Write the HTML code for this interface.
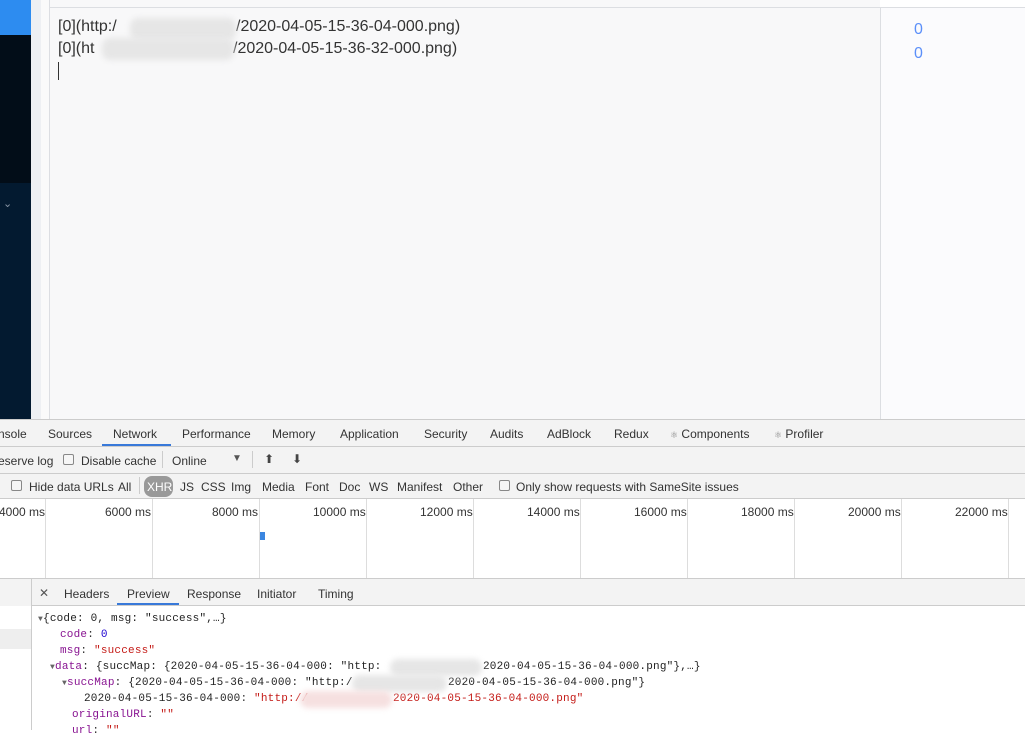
<!DOCTYPE html>
<html><head><meta charset="utf-8"><style>
*{margin:0;padding:0;box-sizing:border-box}
body{width:1025px;height:730px;overflow:hidden;position:relative;background:#fff;font-family:"Liberation Sans","DejaVu Sans",sans-serif;font-size:12px;color:#333}
.a{position:absolute}
.t{position:absolute;white-space:nowrap}
.mono{font-family:"Liberation Mono","DejaVu Sans Mono",monospace;font-size:11px;letter-spacing:0.2px}
.blur{position:absolute;background:#e6e6e6;border-radius:8px;filter:blur(3px)}
.cb{position:absolute;width:11px;height:11px;border:1px solid #888;border-radius:2px;background:#f6f6f6}
.vl{position:absolute;top:499px;height:79px;width:1px;background:#ddd}
</style></head><body>
<div class="a" style="left:0;top:0;width:31px;height:35px;background:#2d8cf0"></div>
<div class="a" style="left:0;top:35px;width:31px;height:148px;background:#020d18"></div>
<div class="a" style="left:0;top:183px;width:31px;height:236px;background:#031a30"></div>
<div class="t" style="left:3px;top:197px;color:#8a96a6;font-size:11px">⌄</div>
<div class="a" style="left:31px;top:0;width:10px;height:419px;background:#eef0f3"></div>
<div class="a" style="left:41px;top:0;width:8px;height:419px;background:#fafafa"></div>
<div class="a" style="left:49px;top:0;width:1px;height:419px;background:#dcdee2"></div>
<div class="a" style="left:50px;top:0;width:830px;height:419px;background:#f8f8f9"></div>
<div class="a" style="left:50px;top:7px;width:975px;height:1px;background:#dcdee2"></div>
<div class="a" style="left:880px;top:8px;width:1px;height:411px;background:#dcdee2"></div>
<div class="a" style="left:881px;top:8px;width:144px;height:411px;background:#fbfbfd"></div>
<div class="t" style="left:58px;top:18px;font-size:16px;color:#333">[0](http:/</div>
<div class="t" style="left:236px;top:18px;font-size:16px;color:#333">/2020-04-05-15-36-04-000.png)</div>
<div class="t" style="left:58px;top:40px;font-size:16px;color:#333">[0](ht</div>
<div class="t" style="left:233px;top:40px;font-size:16px;color:#333">/2020-04-05-15-36-32-000.png)</div>
<div class="blur" style="left:130px;top:18px;width:106px;height:22px"></div>
<div class="blur" style="left:102px;top:38px;width:132px;height:22px"></div>
<div class="a" style="left:58px;top:62px;width:1px;height:18px;background:#333"></div>
<div class="t" style="left:914px;top:21px;font-size:16px;color:#5b8ff9">0</div>
<div class="t" style="left:914px;top:45px;font-size:16px;color:#5b8ff9">0</div>
<div class="a" style="left:0;top:419px;width:1025px;height:87px;background:#f3f3f3;border-top:1px solid #ccc"></div>
<div class="a" style="left:0;top:446px;width:1025px;height:1px;background:#ccc"></div>
<div class="a" style="left:0;top:473px;width:1025px;height:1px;background:#ccc"></div>
<div class="a" style="left:102px;top:444px;width:69px;height:2px;background:#3879d9"></div>
<div class="t" style="top:427px;left:-2px;color:#333">nsole</div>
<div class="t" style="top:427px;left:48px">Sources</div>
<div class="t" style="top:427px;left:113px">Network</div>
<div class="t" style="top:427px;left:182px">Performance</div>
<div class="t" style="top:427px;left:272px">Memory</div>
<div class="t" style="top:427px;left:340px">Application</div>
<div class="t" style="top:427px;left:424px">Security</div>
<div class="t" style="top:427px;left:490px">Audits</div>
<div class="t" style="top:427px;left:547px">AdBlock</div>
<div class="t" style="top:427px;left:614px">Redux</div>
<div class="t" style="top:427px;left:670px"><span style="font-size:9px;color:#888">⚛</span> Components</div>
<div class="t" style="top:427px;left:774px"><span style="font-size:9px;color:#888">⚛</span> Profiler</div>
<div class="t" style="top:454px;left:-2px">eserve log</div>
<div class="cb" style="left:63px;top:454px"></div>
<div class="t" style="top:454px;left:81px">Disable cache</div>
<div class="a" style="left:162px;top:451px;width:1px;height:17px;background:#ccc"></div>
<div class="t" style="top:454px;left:172px">Online</div>
<div class="t" style="top:453px;left:232px;font-size:10px;color:#555">▼</div>
<div class="a" style="left:252px;top:451px;width:1px;height:17px;background:#ccc"></div>
<div class="t" style="top:452px;left:264px;font-size:12px;color:#444">⬆</div>
<div class="t" style="top:452px;left:292px;font-size:12px;color:#444">⬇</div>
<div class="cb" style="left:11px;top:480px"></div>
<div class="t" style="top:480px;left:29px">Hide data URLs</div>
<div class="t" style="top:480px;left:118px">All</div>
<div class="a" style="left:139px;top:477px;width:1px;height:17px;background:#ccc"></div>
<div class="a" style="left:144px;top:476px;width:29px;height:21px;background:#999;border-radius:8px"></div>
<div class="t" style="top:480px;left:147px;color:#fff">XHR</div>
<div class="t" style="top:480px;left:180px">JS</div>
<div class="t" style="top:480px;left:201px">CSS</div>
<div class="t" style="top:480px;left:231px">Img</div>
<div class="t" style="top:480px;left:262px">Media</div>
<div class="t" style="top:480px;left:305px">Font</div>
<div class="t" style="top:480px;left:339px">Doc</div>
<div class="t" style="top:480px;left:369px">WS</div>
<div class="t" style="top:480px;left:397px">Manifest</div>
<div class="t" style="top:480px;left:453px">Other</div>
<div class="cb" style="left:499px;top:480px"></div>
<div class="t" style="top:480px;left:516px">Only show requests with SameSite issues</div>
<div class="a" style="left:0;top:498px;width:1025px;height:1px;background:#ccc"></div>
<div class="a" style="left:0;top:499px;width:1025px;height:79px;background:#fff"></div>
<div class="vl" style="left:45px"></div><div class="vl" style="left:152px"></div><div class="vl" style="left:259px"></div><div class="vl" style="left:366px"></div><div class="vl" style="left:473px"></div><div class="vl" style="left:580px"></div><div class="vl" style="left:687px"></div><div class="vl" style="left:794px"></div><div class="vl" style="left:901px"></div><div class="vl" style="left:1008px"></div>
<div class="t" style="top:505px;left:-1px">4000 ms</div>
<div class="t" style="top:505px;left:105px">6000 ms</div>
<div class="t" style="top:505px;left:212px">8000 ms</div>
<div class="t" style="top:505px;left:313px">10000 ms</div>
<div class="t" style="top:505px;left:420px">12000 ms</div>
<div class="t" style="top:505px;left:527px">14000 ms</div>
<div class="t" style="top:505px;left:634px">16000 ms</div>
<div class="t" style="top:505px;left:741px">18000 ms</div>
<div class="t" style="top:505px;left:848px">20000 ms</div>
<div class="t" style="top:505px;left:955px">22000 ms</div>
<div class="a" style="left:260px;top:532px;width:5px;height:8px;background:#3b86e0"></div>
<div class="a" style="left:0;top:578px;width:1025px;height:1px;background:#ccc"></div>
<div class="a" style="left:0;top:579px;width:31px;height:151px;background:#fff"></div>
<div class="a" style="left:0;top:579px;width:31px;height:27px;background:#f3f3f3"></div>
<div class="a" style="left:0;top:629px;width:31px;height:20px;background:#eee"></div>
<div class="a" style="left:31px;top:579px;width:1px;height:151px;background:#ccc"></div>
<div class="a" style="left:32px;top:579px;width:993px;height:27px;background:#f3f3f3"></div>
<div class="a" style="left:32px;top:605px;width:993px;height:1px;background:#ccc"></div>
<div class="a" style="left:117px;top:603px;width:62px;height:2px;background:#3879d9"></div>
<div class="t" style="top:586px;left:39px;color:#555">✕</div>
<div class="t" style="top:587px;left:64px">Headers</div>
<div class="t" style="top:587px;left:127px">Preview</div>
<div class="t" style="top:587px;left:187px">Response</div>
<div class="t" style="top:587px;left:257px">Initiator</div>
<div class="t" style="top:587px;left:318px">Timing</div>
<div class="t mono" style="top:613px;left:38px;color:#222"><span style="font-size:8px;color:#666">▼</span>{code: 0, msg: "success",…}</div>
<div class="t mono" style="top:629px;left:60px"><span style="color:#881391">code</span>: <span style="color:#1c00cf">0</span></div>
<div class="t mono" style="top:645px;left:60px"><span style="color:#881391">msg</span>: <span style="color:#c41a16">"success"</span></div>
<div class="t mono" style="top:661px;left:50px;color:#222"><span style="font-size:8px;color:#666">▼</span><span style="color:#881391">data</span>: {succMap: {2020-04-05-15-36-04-000: "http:</div>
<div class="t mono" style="top:661px;left:483px;color:#222">2020-04-05-15-36-04-000.png"},…}</div>
<div class="t mono" style="top:677px;left:62px;color:#222"><span style="font-size:8px;color:#666">▼</span><span style="color:#881391">succMap</span>: {2020-04-05-15-36-04-000: "http:/</div>
<div class="t mono" style="top:677px;left:448px;color:#222">2020-04-05-15-36-04-000.png"}</div>
<div class="t mono" style="top:693px;left:84px"><span style="color:#222">2020-04-05-15-36-04-000</span>: <span style="color:#c41a16">"http://</span></div>
<div class="t mono" style="top:693px;left:393px;color:#c41a16">2020-04-05-15-36-04-000.png"</div>
<div class="t mono" style="top:709px;left:72px"><span style="color:#881391">originalURL</span>: <span style="color:#c41a16">""</span></div>
<div class="t mono" style="top:725px;left:72px"><span style="color:#881391">url</span>: <span style="color:#c41a16">""</span></div>
<div class="blur" style="left:390px;top:659px;width:92px;height:17px"></div>
<div class="blur" style="left:352px;top:675px;width:95px;height:17px"></div>
<div class="blur" style="left:300px;top:691px;width:92px;height:17px;background:#f6e0e0"></div>
</body></html>
